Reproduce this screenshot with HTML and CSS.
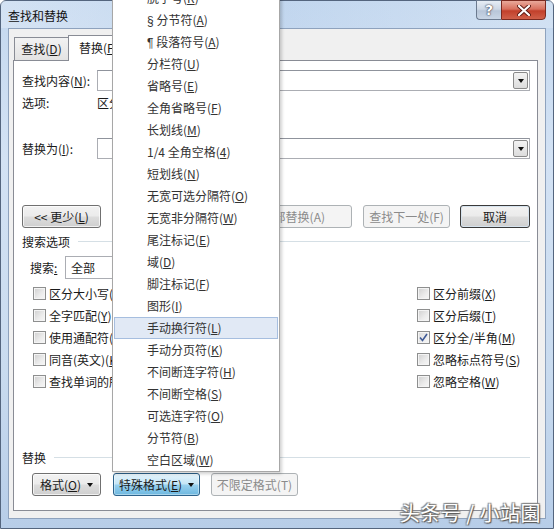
FILE: index.html
```html
<!DOCTYPE html>
<html lang="zh-CN">
<head>
<meta charset="utf-8">
<title>查找和替换</title>
<link rel="stylesheet" href="styles.css">
</head>
<body>
<div class="window">
  <div class="titlebar">
    <span class="title">查找和替换</span>
    <div class="caption-btns">
      <div class="cbtn help">?</div>
      <div class="cbtn close">
        <svg width="14" height="11" viewBox="0 0 14 11"><path d="M2 1 L12 10 M12 1 L2 10" stroke="#5a1a14" stroke-width="4" stroke-linecap="round"/><path d="M2 1 L12 10 M12 1 L2 10" stroke="#ffffff" stroke-width="2.2" stroke-linecap="round"/></svg>
      </div>
    </div>
  </div>
  <div class="client">
    <div class="tabs">
      <div class="tab">查找(<u>D</u>)</div>
      <div class="tab active">替换(<u>P</u>)</div>
      <div class="tab">定位(<u>G</u>)</div>
    </div>
    <div class="panel">
      <div class="row field-row">
        <span class="label">查找内容(<u>N</u>):</span>
        <div class="combo"><span class="arrow"><i></i></span></div>
      </div>
      <div class="row opt-row">
        <span class="label">选项:</span>
        <span class="opt-value">区分全/半角</span>
      </div>
      <div class="row field-row replace-row">
        <span class="label">替换为(<u>I</u>):</span>
        <div class="combo"><span class="arrow"><i></i></span></div>
      </div>
      <div class="row btn-row">
        <div class="btn less">&lt;&lt; 更少(<u>L</u>)</div>
        <div class="btn disabled replace-one">替换(R)</div>
        <div class="btn disabled replace-all">全部替换(A)</div>
        <div class="btn disabled find-next">查找下一处(F)</div>
        <div class="btn default cancel">取消</div>
      </div>
      <div class="group group-search"><span>搜索选项</span><i></i></div>
      <div class="row search-row">
        <span class="label">搜索<u>:</u></span>
        <div class="select">全部</div>
      </div>
      <div class="checks">
        <div class="col left-col">
          <label class="chk"><span class="box"></span>区分大小写(<u>H</u>)</label>
          <label class="chk"><span class="box"></span>全字匹配(<u>Y</u>)</label>
          <label class="chk"><span class="box"></span>使用通配符(<u>U</u>)</label>
          <label class="chk"><span class="box"></span>同音(英文)(<u>K</u>)</label>
          <label class="chk"><span class="box"></span>查找单词的所有形式(英文)(<u>W</u>)</label>
        </div>
        <div class="col right-col">
          <label class="chk"><span class="box"></span>区分前缀(<u>X</u>)</label>
          <label class="chk"><span class="box"></span>区分后缀(<u>T</u>)</label>
          <label class="chk"><span class="box checked"><svg width="9" height="9" viewBox="0 0 9 9"><path d="M1 4.5 L3.5 7.5 L8 1" fill="none" stroke="#3f5a96" stroke-width="1.6"/></svg></span>区分全/半角(<u>M</u>)</label>
          <label class="chk"><span class="box"></span>忽略标点符号(<u>S</u>)</label>
          <label class="chk"><span class="box"></span>忽略空格(<u>W</u>)</label>
        </div>
      </div>
      <div class="group group-replace"><span>替换</span><i></i></div>
      <div class="row bottom-row">
        <div class="btn fmt">格式(<u>O</u>) <b class="tri"></b></div>
        <div class="btn pressed special">特殊格式(<u>E</u>) <b class="tri"></b></div>
        <div class="btn disabled nofmt">不限定格式(T)</div>
      </div>
    </div>
  </div>
  <div class="menu">
    <div class="mi">脱字号(<u>R</u>)</div>
    <div class="mi"><span class="sym">§</span> 分节符(<u>A</u>)</div>
    <div class="mi"><span class="sym">¶</span> 段落符号(<u>A</u>)</div>
    <div class="mi">分栏符(<u>U</u>)</div>
    <div class="mi">省略号(<u>E</u>)</div>
    <div class="mi">全角省略号(<u>F</u>)</div>
    <div class="mi">长划线(<u>M</u>)</div>
    <div class="mi">1/4 全角空格(<u>4</u>)</div>
    <div class="mi">短划线(<u>N</u>)</div>
    <div class="mi">无宽可选分隔符(<u>O</u>)</div>
    <div class="mi">无宽非分隔符(<u>W</u>)</div>
    <div class="mi">尾注标记(<u>E</u>)</div>
    <div class="mi">域(<u>D</u>)</div>
    <div class="mi">脚注标记(<u>F</u>)</div>
    <div class="mi">图形(<u>I</u>)</div>
    <div class="mi hot">手动换行符(<u>L</u>)</div>
    <div class="mi">手动分页符(<u>K</u>)</div>
    <div class="mi">不间断连字符(<u>H</u>)</div>
    <div class="mi">不间断空格(<u>S</u>)</div>
    <div class="mi">可选连字符(<u>O</u>)</div>
    <div class="mi">分节符(<u>B</u>)</div>
    <div class="mi">空白区域(<u>W</u>)</div>
  </div>
  <div class="watermark">头条号 / 小站園</div>
</div>
</body>
</html>
```

FILE: styles.css
```css
* { box-sizing: border-box; }
html, body { margin: 0; padding: 0; }
body {
  width: 554px; height: 529px; overflow: hidden;
  font-family: "Noto Sans CJK SC", "Noto Sans", sans-serif;
  font-size: 12px; color: #1a1a1a;
}
u { text-decoration: underline; text-underline-offset: 1px; }

.window {
  position: relative;
  width: 554px; height: 529px;
  background: linear-gradient(180deg, #c4d8ef 0%, #d3e2f4 30%, #c9dbef 70%, #b7cde8 100%);
  border: 1px solid #54657e;
  border-radius: 6px 6px 0 0;
  display: flex; flex-direction: column;
  padding: 0 7px 9px 7px;
}

.titlebar {
  height: 27px; flex: none;
  display: flex; align-items: flex-start; justify-content: space-between;
  background: linear-gradient(90deg, rgba(255,255,255,0.25), rgba(180,205,235,0.2) 50%, rgba(255,255,255,0.2));
  margin: 0 -7px; padding: 0 0 0 7px;
}
.title { line-height: 18px; margin-top: 6px; font-size: 12px; color: #111; }
.caption-btns { display: flex; margin-right: 7px; margin-top: -1px; }
.cbtn {
  height: 20px; border: 1px solid #6b7a8f; display: flex; align-items: center; justify-content: center;
}
.help {
  width: 25px; border-radius: 0 0 0 4px; border-right: none;
  background: linear-gradient(180deg, #e6edf5 0%, #cdd8e6 45%, #b8c6d9 55%, #c9d6e6 100%);
  color: #fff; font-family: "DejaVu Sans", sans-serif; font-weight: bold; font-size: 14px;
  text-shadow: 0 0 2px #334, 0 0 1px #223;
}
.close {
  width: 45px; border-radius: 0 0 4px 0; border-color: #7a2a20;
  background: linear-gradient(180deg, #e9a99b 0%, #d8705e 45%, #c2402b 55%, #d0604a 100%);
}

.client {
  flex: 1;
  background: #f0f0f0;
  border: 1px solid #8ea2bd;
  padding: 6px 7px 7px 4px;
  display: flex; flex-direction: column;
}

.tabs { display: flex; align-items: flex-end; height: 25px; padding-left: 1px; }
.tab {
  width: 55px; height: 23px; text-align: center; line-height: 21px;
  border: 1px solid #898c95; border-bottom: none;
  background: linear-gradient(180deg, #f2f2f2, #e3e3e3);
  margin-right: -1px;
}
.tab.active {
  width: 58px; height: 26px; background: #fff; margin-bottom: -1px; position: relative; z-index: 2;
  line-height: 24px; text-align: left; padding-left: 10px;
}

.panel {
  flex: 1;
  background: #fff;
  border: 1px solid #898c95;
  padding: 9px 7px 0 8px;
  position: relative;
}

.row { display: flex; align-items: center; }
.label { flex: none; }
.field-row { height: 21px; }
.field-row .label { width: 75px; }
.combo {
  flex: 1; height: 21px; border: 1px solid #abadb3; border-top-color: #8f939c;
  display: flex; justify-content: flex-end; align-items: stretch; padding: 1px;
}
.arrow {
  width: 15px; border: 1px solid #8a8a8a; border-radius: 2px;
  background: linear-gradient(180deg, #f3f3f3, #dcdcdc);
  display: flex; align-items: center; justify-content: center;
}
.arrow i {
  width: 0; height: 0; border-left: 3.5px solid transparent; border-right: 3.5px solid transparent;
  border-top: 4px solid #111;
}
.opt-row { height: 20px; margin-top: 1px; }
.opt-row .label { width: 75px; }
.replace-row { margin-top: 26px; }

.btn-row { height: 23px; margin-top: 46px; }
.btn {
  height: 23px; border: 1px solid #707070; border-radius: 3px;
  background: linear-gradient(180deg, #f2f2f2 0%, #ebebeb 48%, #dddddd 52%, #cfcfcf 100%);
  display: flex; align-items: center; justify-content: center; flex: none;
  box-shadow: inset 0 0 0 1px rgba(255,255,255,0.7);
}
.btn.disabled {
  border-color: #adb2b5; background: #f4f4f4; color: #8b8b8b; box-shadow: none;
}
.btn.default { border-color: #3a3a3a; box-shadow: inset 0 0 0 1px #d6e3ee; }
.less { width: 79px; }
.replace-one { width: 87px; margin-left: 40px; }
.replace-all { width: 112px; margin-left: 12px; justify-content: flex-end; padding-right: 26px; }
.find-next { width: 87px; margin-left: 11px; }
.cancel { width: 70px; margin-left: 10px; }

.group { display: flex; align-items: center; height: 16px; }
.group i { flex: 1; height: 1px; background: #d5dfe5; margin-left: 8px; }
.group-search { margin-top: 5px; }
.group-replace { margin-top: 57px; }

.search-row { height: 23px; margin-top: 7px; padding-left: 8px; }
.search-row .label { width: 35px; }
.select {
  width: 130px; height: 23px; border: 1px solid #abadb3; padding-left: 5px; line-height: 21px;
}

.checks { display: flex; margin-top: 3px; }
.col { display: flex; flex-direction: column; }
.left-col { margin-left: 11px; width: 384px; }
.chk { height: 22px; display: flex; align-items: center; white-space: nowrap; }
.box {
  width: 13px; height: 13px; border: 1px solid #8e8f8f; margin-right: 3px; flex: none;
  background: linear-gradient(135deg, #cfcfcf 0%, #ececec 60%, #f7f7f7 100%);
  box-shadow: inset 0 0 0 1px #f4f4f4;
  display: flex; align-items: center; justify-content: center;
}
.box.checked { background: linear-gradient(135deg, #dcdcdc, #f7f7f7); }

.bottom-row { height: 23px; margin-top: 8px; padding-left: 10px; }
.tri {
  display: inline-block; width: 0; height: 0; margin-left: 6px;
  border-left: 3.5px solid transparent; border-right: 3.5px solid transparent;
  border-top: 4px solid #111;
}
.fmt { width: 69px; }
.special {
  width: 87px; margin-left: 12px;
  border-color: #2c628b;
  background: linear-gradient(180deg, #e5f4fc 0%, #c4e5f6 48%, #98d1ef 52%, #6db7df 100%);
  box-shadow: inset 0 0 0 1px rgba(255,255,255,0.4);
}
.nofmt { width: 87px; margin-left: 11px; }

.menu {
  position: absolute; left: 111px; top: -16px; width: 168px; height: 487px;
  background: #fff; border: 1px solid #a7a7a7;
  box-shadow: 2px 2px 3px rgba(0,0,0,0.18);
  padding: 1px 1px;
  z-index: 10;
  color: #333;
}
.mi { height: 22px; line-height: 22px; padding-left: 33px; white-space: nowrap; }
.mi .sym { font-family: "Liberation Sans", sans-serif; font-size: 12px; }
.mi.hot {
  background: #e1e9f5; border: 1px solid #a6bedf; line-height: 20px; padding-left: 32px;
}

.watermark {
  position: absolute; right: 12px; bottom: 2px;
  font-size: 20px; line-height: 26px; color: #fff; letter-spacing: 0.5px;
  text-shadow: 1px 1px 1px #555, -1px -1px 1px #888, 1px -1px 1px #888, -1px 1px 1px #888;
  z-index: 11;
}
```
